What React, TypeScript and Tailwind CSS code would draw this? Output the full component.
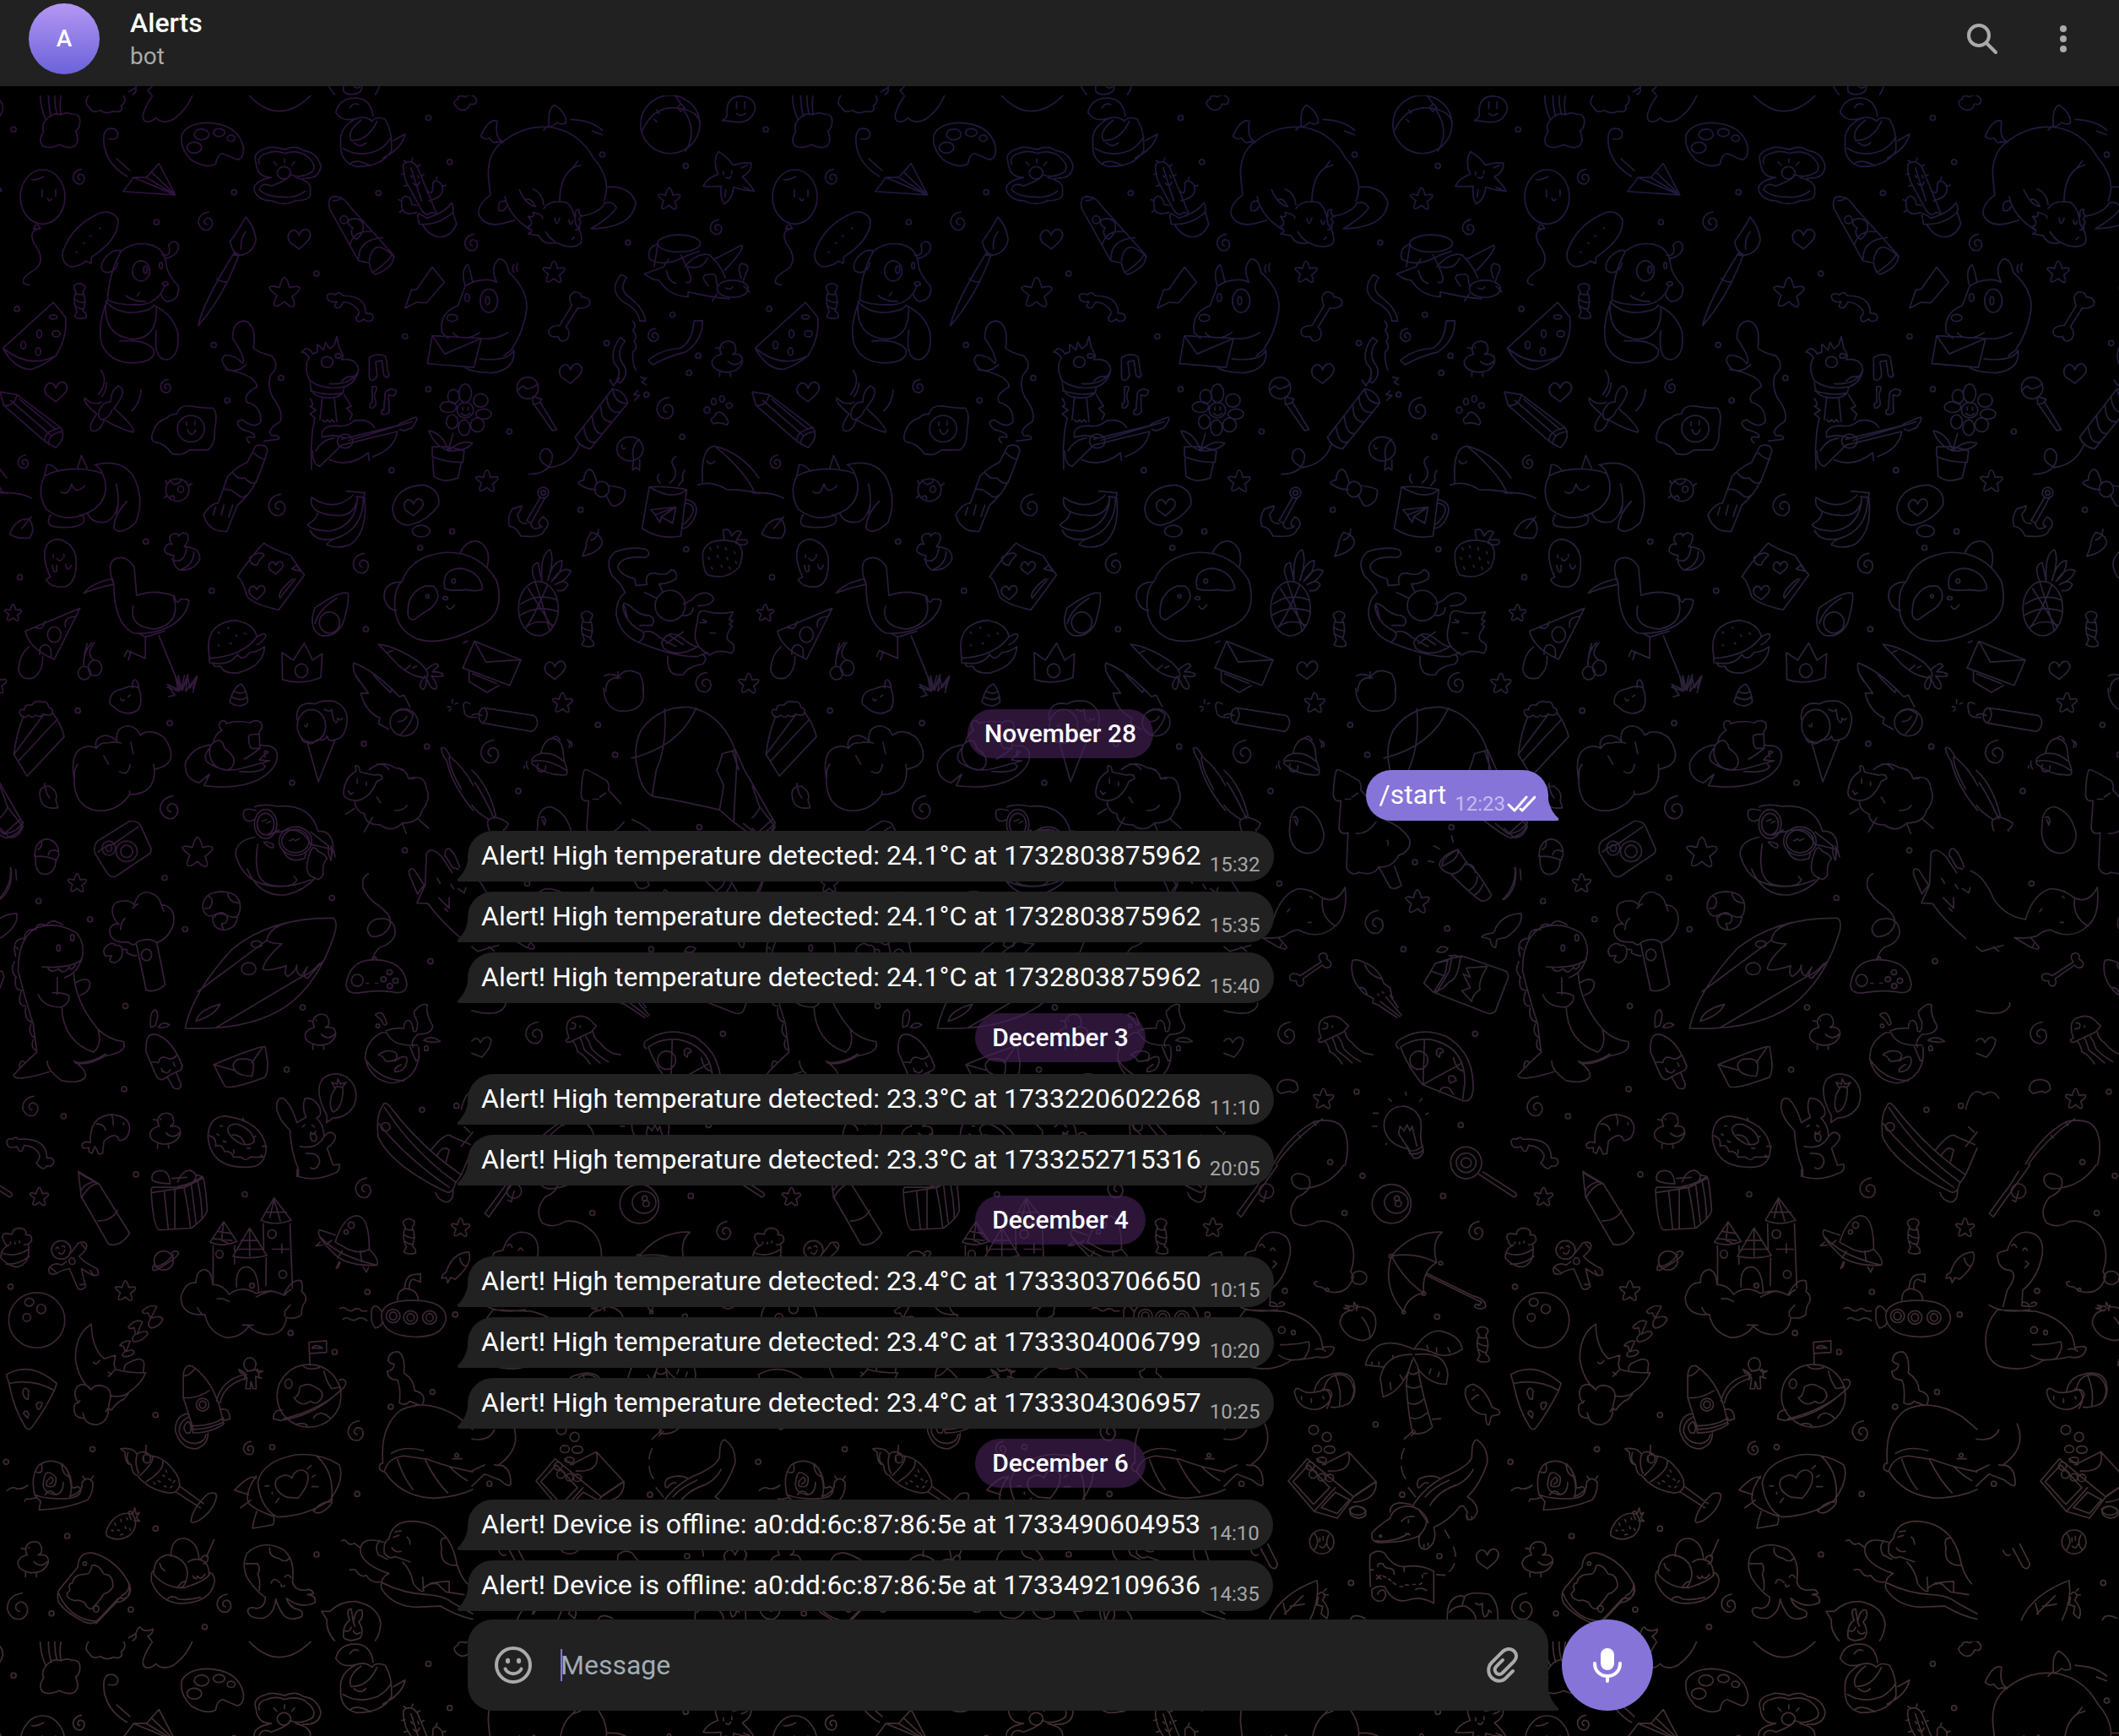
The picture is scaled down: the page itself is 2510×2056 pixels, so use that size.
import React from "react";

type Sheet = {
  x: number;
  y: number;
  sx: number;
  sy: number;
  paths: string[];
  ovals: number[][];
  stars: number[][];
  spirals: number[][];
  hearts: number[][];
  dots: number[][];
  ducks?: number[][];
  candies?: number[][];
};

const STAR = "M0 -12Q2 -12 4 -4Q12 -6 12 -3Q12 -1 6 3Q9 10 7 11Q5 12 0 7Q-6 12 -8 10Q-9 9 -6 2Q-12 -2 -12 -4Q-11 -6 -4 -4Q-2 -12 0 -12Z";
const SPIRAL = "M0 3Q-4 2 -3 -2Q0 -7 5 -3Q9 4 2 9Q-7 11 -10 1Q-10 -10 2 -12";
const HEART = "M0 12L-11 4Q-16 -5 -8 -10Q-2 -11 0 -4Q4 -14 11 -10Q17 -4 9 4Z";
const DUCK = "M-6 -4Q-11 -14 -2 -19Q10 -22 11 -11Q12 -6 7 -4Q20 -6 19 5Q14 18 -2 17Q-18 14 -17 4Q-14 -3 -6 -4M-13 -12L-8 -11M-8 17V22M5 17V22M2 4Q10 12 18 4M-4 -13v1";
const CANDY = "M-6 -19Q0 -24 6 -19Q8 -15 4 -12Q9 0 4 11Q9 14 8 19Q0 22 -6 18L-3 12Q-9 0 -4 -12Q-8 -15 -6 -19ZM-5 -10Q0 -7 5 -9M-6 -3Q0 2 7 1M-5 5Q0 9 5 9";

const top: Sheet = {
  x: 0,
  y: 100,
  sx: 0.574,
  sy: 0.4592,
  paths: [
    // jellyfish cloud, basin, pear and arc
    "M83 28Q83 60 95 92M100 28Q100 60 106 82M113 28Q112 55 118 78M126 28Q122 55 126 78M95 92Q108 70 125 78Q140 70 148 77Q165 75 165 95Q165 115 156 120Q165 145 155 158Q145 168 122 155Q100 168 88 158Q78 145 90 122Q85 105 95 92Z",
    "M183 28Q172 48 185 60Q190 75 207 67Q220 78 233 69Q255 75 250 55Q262 45 255 28M315 28Q285 85 300 95Q310 100 322 86Q335 105 360 88Q385 65 397 28M514 28Q575 110 642 28",
    // palette
    "M375 130Q370 165 395 195Q425 218 445 205Q448 180 460 178Q480 190 490 194Q505 190 502 160Q490 100 425 99Q385 102 375 130Z",
    // paper plane
    "M224 140Q245 145 243 125Q238 110 222 115Q210 125 216 165Q225 210 262 237M241 192L268 222M302 240L328 204L362 285L254 276L276 240L302 240M276 240L362 285M302 240L362 285M312 225L362 285",
    // balloon
    "M65 245Q75 248 90 238M87 272V290M115 272V288M98 293Q101 305 106 296M74 362l-5 10h14l-5 -10M75 375Q60 380 70 410Q95 450 75 475Q40 500 50 514l10 3",
    // clam
    "M528 200Q520 175 550 165Q560 158 587 168Q610 155 625 170Q655 175 662 210Q660 245 625 242M528 200Q530 240 560 240Q520 250 525 275Q535 300 560 300Q585 315 610 300Q645 300 640 275Q645 250 610 240M535 205Q530 185 550 178Q570 168 587 178Q612 168 630 182Q655 205 645 225Q620 245 598 232Q598 245 560 262Q540 250 535 272Q550 290 580 290Q610 295 630 275M565 200l6 8M587 192v10M608 200l-6 8",
    // snake
    "M770 82Q765 35 733 35Q700 35 693 72Q705 98 735 88Q755 80 768 95M722 60Q730 45 740 52M735 88Q700 110 703 150Q700 200 735 212Q790 212 808 170Q810 120 795 90Q775 80 768 95M745 92Q715 120 725 145Q760 145 778 95M708 165Q740 190 780 170Q800 155 808 135M812 145L836 128Q830 165 790 190M722 205Q735 190 765 210M730 150Q745 165 755 150",
    // cactus
    "M833 205Q850 190 862 215L880 270L898 325Q905 335 890 330Q880 345 868 320L838 250Q830 220 833 205ZM883 275Q895 290 893 255Q900 240 912 260Q920 290 885 300M860 330Q835 340 830 320Q825 290 838 288Q848 290 850 310L860 312M848 215L870 300M862 340Q860 325 880 345Q920 330 932 305Q940 325 930 335Q900 365 865 360ZM872 362Q885 390 905 393Q930 395 942 360L935 330M848 235l3 5M862 235l2 6M853 255Q860 268 866 252M838 200l-5 -4M850 196l2 -6M862 210l5 -3M870 235l5 -3M835 230l-6 2M840 260l-6 2M900 245l2 -6M914 262l6 -2M828 300l-5 -3M830 325l-5 4",
    // sleeping dragon
    "M1035 150Q1005 180 1008 240L1012 285Q985 310 988 335Q1000 370 1040 358L1062 350M1035 150Q1080 105 1130 110Q1190 115 1225 190Q1250 225 1252 265Q1300 260 1312 305Q1305 370 1220 372Q1262 340 1272 318Q1265 300 1248 305Q1240 330 1200 340M1252 265Q1250 290 1246 300M1122 118L1133 105Q1130 60 1145 53Q1170 75 1168 100Q1155 105 1150 98Q1140 110 1135 108M1038 148Q1020 140 1026 95Q1010 85 992 133Q1000 145 1010 138Q1018 155 1025 148L1038 150M1155 302Q1155 240 1182 215L1192 198M1182 215L1198 208M1042 290Q1050 340 1095 375M1045 302Q1025 295 1030 325Q1040 330 1045 315M1072 272Q1085 310 1105 315Q1095 290 1085 298M1100 270Q1120 280 1122 310M1178 90Q1220 92 1243 118M1222 120L1243 130",
    "M1122 320Q1135 295 1170 305Q1185 320 1188 360Q1205 390 1198 410Q1180 428 1148 408Q1120 415 1112 390L1090 385Q1105 378 1088 368Q1105 362 1090 340Q1105 345 1100 330Q1120 335 1120 345M1188 340Q1185 320 1196 323Q1192 335 1200 338L1194 348Q1203 355 1195 362Q1200 372 1188 375M1145 345Q1148 372 1155 345M1174 350Q1178 370 1182 352M1126 380Q1132 395 1148 408M1180 400l5 -6",
    // beach ball, ghost bubble, starfish
    "M1325 120Q1350 50 1405 62M1405 62Q1440 70 1445 100M1405 50Q1400 40 1392 28M1412 68Q1440 120 1415 172M1405 50l8 10l-8 10l-7 -10zM1355 65l5 10M1350 90l5 6",
    "M1500 70Q1500 30 1530 30Q1560 35 1558 65Q1550 100 1520 97L1490 93Q1503 88 1500 70ZM1520 45V62M1537 45V62M1520 75Q1530 85 1538 75",
    "M1482 173Q1500 185 1513 208Q1535 200 1550 203Q1552 225 1532 238Q1550 260 1556 275Q1530 272 1514 265Q1510 300 1494 308Q1485 290 1488 262Q1465 265 1451 262Q1460 240 1482 232Q1470 200 1482 173ZM1493 225v8M1510 222v8M1498 240Q1506 245 1508 236M1535 265l12 6M1496 290l2 -18M1530 215l12 -6",
    // chat bubble
    "M188 462L189 445Q245 400 244 350Q235 325 210 330Q150 360 130 430Q125 460 145 470Q165 470 178 455ZM157 432l2 2M172 408l2 2M186 390l2 2M205 370l2 2",
    // dog
    "M250 430Q275 405 305 412Q340 420 343 465Q345 490 368 520Q372 555 345 560Q335 555 332 540M340 520Q325 565 290 568Q240 570 222 555M250 430Q225 485 222 555Q200 620 210 670Q225 715 270 718Q320 718 318 685Q300 655 247 662M250 430Q235 420 215 450Q200 485 225 485Q240 480 243 460M335 440Q355 445 348 415Q360 395 368 415Q370 440 340 450M218 560Q240 590 275 588Q310 585 317 570M218 570Q215 650 275 657Q325 655 323 575M317 570Q355 590 367 640Q372 700 345 710Q315 710 323 635M260 545Q275 560 300 560M283 545l5 -8",
    // brush
    "M507 342Q490 380 475 405Q480 440 500 440Q525 430 528 400Q525 365 507 342ZM483 435Q420 560 409 622Q460 550 493 440ZM447 500Q458 512 470 508M480 440h14M507 380Q495 400 498 425",
    // bread roll
    "M680 320Q675 290 690 289Q710 290 722 315L812 440Q815 470 775 490Q765 485 762 460L740 455ZM814 445Q770 390 762 455M722 415Q730 375 765 380M740 450Q740 400 790 395M720 350Q735 340 748 355Q755 380 735 400Q720 385 728 370Q715 360 720 350M688 300Q700 300 705 292M768 485Q800 460 808 440",
    // postal dog
    "M960 520Q985 500 1015 505L1025 510M975 508Q968 465 965 465Q950 480 960 520L945 570Q905 590 912 640L925 655M1025 510Q1010 470 1030 450Q1045 450 1050 485Q1090 530 1087 580Q1080 640 1055 685L1040 700M1060 685Q1065 735 1015 744Q970 742 960 730M1060 685Q1050 715 990 708M990 655Q1020 660 1048 640M935 640Q945 660 975 650L990 640M1060 465q-4 10 0 20M1068 462q-4 10 0 20M892 648L993 655L978 730L882 720ZM892 648L918 695L993 655",
    // bolt and bones
    "M892 471L917 510L880 563L860 562L836 577L849 530L860 528Z",
    "M695 560Q675 565 675 545Q680 535 692 543Q700 530 708 545Q755 545 755 590Q775 590 768 608Q755 615 752 605Q735 620 735 600Q745 590 738 580Q725 560 708 562Q700 585 690 572Z",
    "M1192 577L1168 625Q1180 640 1170 658Q1155 668 1152 650Q1130 655 1133 632Q1142 620 1155 622L1180 570Q1170 545 1185 535Q1200 535 1200 548Q1220 550 1217 568Q1205 580 1192 577",
    // watermelon
    "M110 562L6 680Q60 735 115 700Q140 650 135 600ZM6 680Q30 735 65 735Q90 725 115 700",
    // bottle and steam
    "M508 722Q490 745 470 735Q450 710 465 698Q490 700 500 720Q510 710 480 655Q480 610 505 610Q530 620 523 680Q530 690 560 700Q580 725 558 750Q550 790 570 820Q585 850 578 870Q550 890 560 905Q580 905 575 915L545 920M465 735Q530 750 530 780Q500 800 510 820Q540 830 538 870Q525 890 500 865Q480 870 500 890Q530 900 525 910Q500 905 515 925",
    "M528 932Q550 925 552 945Q545 975 530 1020Q515 1060 490 1085L468 1153Q430 1155 420 1110Q435 1080 450 1080Q465 1030 470 1010Q490 985 510 975ZM523 950Q540 970 548 965M480 1000Q490 1020 505 1015Q520 1035 530 1025M460 1045Q475 1040 490 1058Q500 1070 508 1060M462 1085l-5 25M480 1085l-8 30M445 1090l-5 20",
    // llama with a guitar
    "M640 765Q625 730 638 705Q630 690 622 690L630 682Q640 680 645 695L655 690L655 670L668 685L672 665L680 682L690 672L695 650L700 680Q712 700 705 710Q735 705 740 735Q730 775 680 772M640 765Q670 790 710 780Q735 770 740 735M640 770Q640 810 680 808Q710 808 710 780M640 790Q680 805 708 795M640 810Q650 830 640 830L652 840L640 850L650 860L645 890L642 940L643 993M665 808L660 865M690 808L695 870M710 800L725 830L715 835L727 850L722 865M665 865l5 6l5 -6l5 6l5 -6l5 6M705 765l10 -10l18 -3",
    "M665 910Q660 880 695 880Q715 885 730 868Q760 860 773 885M770 960Q815 940 820 895M665 910Q690 900 712 912M652 945Q665 915 690 912M645 945Q645 980 660 985L705 930M680 968Q720 990 760 950L762 970M705 915L820 880L825 875L858 858Q865 860 850 885L835 893L825 890M705 930L820 895M720 918L850 870",
    // notes
    "M762 745V705Q780 690 796 702L802 750M762 745Q760 765 770 763Q780 755 778 745L775 715L788 712L792 750Q800 762 803 748M768 780V820M768 780Q780 775 776 790Q770 800 776 820Q775 835 765 835Q760 822 768 820M795 795L792 838M795 795Q805 780 818 790Q815 810 802 800L803 845Q795 855 788 850Q785 840 792 838",
    // flower pot
    "M935 900L925 945M925 945Q895 930 885 893Q915 900 925 945Q950 915 975 925Q965 945 925 945M892 935Q925 930 958 945L955 975Q920 975 892 960ZM893 965L895 1010Q915 1030 945 1015L952 975M955 832v8M966 832v8M952 848Q960 860 970 848",
    // lollipop, firecracker, ribbons
    "M1068 790Q1080 770 1085 785Q1100 785 1110 772M1100 805L1118 812L1112 822L1100 825ZM1103 827L1140 893L1149 890L1115 820",
    "M1187 910L1264 785Q1290 790 1295 822L1218 940Q1195 935 1187 910ZM1264 785Q1270 825 1295 822M1205 885Q1210 930 1230 922M1222 855Q1225 905 1245 900M1240 830Q1240 870 1262 870M1252 805Q1255 850 1278 845M1195 930Q1180 980 1135 988Q1105 970 1118 945Q1130 930 1140 955Q1140 1005 1092 1005",
    "M1282 490L1293 498Q1275 530 1300 550Q1330 580 1332 610L1320 610Q1318 580 1285 560Q1255 530 1282 490ZM1280 652L1290 662Q1270 690 1285 720Q1300 745 1280 770L1272 765Q1285 740 1268 720Q1258 690 1280 652ZM1432 610L1450 609Q1450 660 1415 690Q1380 700 1347 723L1338 712Q1360 685 1405 680Q1430 660 1432 610ZM1305 610Q1315 620 1306 635Q1318 650 1308 662Q1318 680 1306 690Q1305 720 1312 737M1322 755L1333 758L1325 768L1334 775M1316 790l-8 10l12 2l-10 12M1258 762l8 15l12 -20",
    // crab and bucket
    "M1357 415L1350 470M1443 430L1420 440Q1370 475 1340 450Q1335 420 1357 412M1405 440Q1440 520 1415 510M1380 450L1370 470Q1340 485 1330 488Q1345 505 1360 505Q1380 545 1420 548L1420 535Q1460 548 1505 553M1375 480Q1380 510 1395 513M1413 470Q1440 430 1465 440Q1490 470 1497 500M1420 470Q1450 480 1460 447M1475 450L1530 415Q1540 420 1495 480M1462 520Q1440 490 1465 490Q1480 485 1478 510L1482 520M1530 500Q1520 470 1530 462Q1550 465 1540 485L1533 510M1480 540l-10 18M1535 520l12 15M1498 525Q1508 532 1512 522",
    // pencil and propeller
    "M0 793L35 800L125 885Q138 910 115 937L92 920L8 828ZM35 800Q30 830 8 828M22 815L105 905M40 812L115 890M92 920Q90 895 125 885M100 928Q100 900 130 895",
    "M210 820Q190 830 175 808Q170 820 200 850Q180 885 190 893Q205 900 215 865Q250 890 275 897Q280 885 235 835Q265 790 245 778Q230 785 228 820Q215 815 205 840Q200 860 210 865Q225 862 232 838M208 737Q225 765 203 800M220 770Q220 790 210 805M291 787Q290 820 272 842",
    // fried egg
    "M315 900Q320 870 345 860Q350 850 365 850Q370 825 395 830Q420 835 440 835Q450 850 443 890Q445 925 430 942L390 943Q375 960 355 952Q340 925 318 922Q310 915 315 900ZM385 870v10M402 868v10M387 890Q395 915 404 890",
    // cat loaf and ladybug
    "M92 1010Q120 990 165 992Q200 995 212 1005Q230 1060 195 1095Q140 1140 95 1095Q75 1050 92 1010L97 980Q110 980 120 998M160 990L168 957L180 990M200 980Q250 965 275 1010Q300 1070 280 1130Q250 1165 235 1145Q235 1110 262 1075M212 1005Q205 985 195 980M240 1030Q248 1080 240 1105M180 1105Q190 1135 220 1128Q240 1115 243 1085M105 1110Q90 1140 120 1142Q170 1145 173 1125Q175 1110 165 1110M125 1050Q140 1065 148 1030Q155 1060 175 1035",
    "M350 1020Q360 1040 372 1025L375 1018M350 1065Q360 1055 360 1070M345 1030l-4 -8M390 1035l6 -6M345 1060l-6 6",
    // bananas, thought bubble, anchor
    "M715 1049L753 1053L751 1065L735 1063M643 1065Q690 1105 728 1060M643 1065Q635 1110 700 1112Q735 1110 738 1063M655 1105Q655 1120 635 1135Q640 1150 680 1152Q735 1140 738 1063M640 1150Q650 1180 690 1172Q750 1150 750 1065M690 1172Q675 1180 675 1188Q700 1200 725 1185Q760 1150 752 1065",
    "M810 1090Q820 1035 875 1033Q910 1045 905 1085Q880 1130 840 1137Q810 1130 810 1090Z",
    "M1115 1065L1087 1125L1096 1132L1125 1065M1057 1095L1077 1087Q1075 1100 1068 1108Q1070 1135 1087 1132M1057 1095Q1045 1120 1052 1140Q1065 1140 1075 1165Q1120 1170 1123 1150Q1140 1130 1120 1115Q1105 1135 1118 1140Q1100 1155 1095 1132",
    // bow, puffer, iceberg
    "M1232 1030Q1225 990 1215 993Q1205 1000 1205 1020Q1190 1025 1195 1030Q1210 1045 1230 1045M1255 1035Q1290 1040 1290 1048Q1290 1065 1285 1075Q1270 1092 1262 1085Q1250 1060 1250 1058",
    "M1320 915Q1300 935 1308 968M1307 972L1305 995L1313 988L1320 995L1320 968M1283 930Q1285 945 1290 938",
    "M1450 1028Q1445 935 1475 933Q1530 950 1566 1015M1475 933Q1540 1000 1558 1055M1440 1033Q1470 1020 1500 1045Q1540 1045 1568 1055M1458 970Q1465 985 1475 972M0 1053Q40 1050 65 1067",
    // mug
    "M1340 1038L1325 1145Q1360 1175 1405 1165L1417 1045Q1390 1075 1340 1038ZM1340 1038Q1380 1035 1417 1045M1415 1070Q1450 1080 1430 1125Q1420 1145 1407 1145M1415 1080Q1440 1085 1425 1115Q1418 1128 1410 1135M1343 1097L1395 1090L1388 1132L1365 1115L1362 1130L1352 1110ZM1352 1110L1395 1090L1365 1115M1395 960Q1380 970 1392 990Q1400 1010 1382 1028M1413 995Q1405 1010 1410 1020L1400 1035M1360 1005Q1352 1015 1362 1028",
    // leaves, ghost, bee
    "M65 1115L45 1145M20 1160Q30 1120 60 1120Q75 1150 60 1170Q35 1172 20 1160ZM1235 1147Q1235 1170 1220 1175M1220 1155Q1208 1180 1210 1190L1202 1217Q1240 1205 1243 1180Q1240 1160 1220 1155Z",
    "M92 1220Q90 1175 120 1173Q150 1180 157 1220Q160 1285 135 1295Q105 1300 95 1277L104 1270Q95 1250 92 1220ZM110 1220v-6M132 1218v-6M117 1222Q123 1235 130 1222M108 1240Q110 1262 117 1255L117 1240M135 1238Q140 1260 147 1240",
    "M358 1215Q335 1210 341 1195Q345 1182 355 1186Q345 1170 355 1160Q370 1155 368 1165Q378 1150 388 1162Q390 1180 380 1192Q415 1195 412 1225Q400 1255 370 1252Q355 1240 358 1215ZM355 1225Q380 1240 385 1195M372 1252Q400 1240 400 1205",
    // heron
    "M235 1290Q220 1240 235 1225Q260 1210 277 1245Q280 1290 282 1318Q320 1300 360 1320Q365 1345 372 1328Q390 1325 390 1335Q385 1365 365 1385Q330 1420 275 1415Q235 1390 235 1290L232 1275Q190 1285 173 1312Q195 1300 232 1290M275 1345Q265 1400 320 1405Q375 1390 358 1320M285 1415L300 1425V1480L262 1460M262 1460l-5 15M270 1462l-5 22M328 1422L365 1535M300 1425L340 1410M345 1555L370 1565L368 1525L375 1560L388 1522L383 1565L407 1525L398 1568",
    // pillow, avocado, burger, crown
    "M495 1260Q530 1200 545 1183Q555 1195 600 1215Q615 1245 628 1265Q590 1330 575 1355Q520 1340 510 1320Q500 1275 490 1270ZM610 1275Q580 1320 578 1325Q570 1310 605 1275M515 1220Q540 1200 545 1215Q535 1225 530 1240Q515 1240 515 1220M602 1250l18 5l-8 -15z",
    "M650 1350Q700 1305 718 1312Q722 1330 708 1390Q690 1430 660 1420Q635 1400 650 1350ZM650 1390Q660 1350 695 1325",
    "M432 1475Q420 1390 485 1382Q525 1390 530 1425Q500 1475 432 1480ZM530 1425Q550 1410 548 1425Q540 1440 530 1445M432 1480Q430 1495 440 1492Q440 1505 455 1500Q460 1520 490 1518Q545 1500 546 1450Q530 1465 515 1465Q500 1490 490 1470Q475 1500 440 1492M450 1412l2 3M470 1400l2 3M487 1420l2 3M505 1415l2 3M475 1440l2 3M450 1445l2 3",
    "M583 1535L582 1465L605 1485L628 1441L645 1485L665 1468L662 1530Q620 1550 583 1535Z",
    // panda
    "M830 1280Q850 1215 920 1207Q990 1205 1025 1280Q1045 1370 985 1400Q910 1450 860 1430Q810 1400 815 1330Q815 1300 830 1280ZM828 1283Q790 1285 793 1325Q800 1355 818 1357M950 1207Q965 1170 990 1180Q1015 1200 1005 1245M918 1300Q910 1250 950 1248Q990 1255 996 1300Q990 1310 960 1303Q930 1308 918 1300ZM855 1380Q835 1385 845 1330Q865 1285 895 1295Q915 1320 890 1350Q870 1365 855 1380ZM922 1345Q928 1362 938 1342",
    // pineapple and strawberry
    "M1075 1340Q1110 1310 1150 1330M1072 1370Q1110 1340 1152 1360M1085 1400Q1110 1375 1142 1395M1090 1300L1140 1400M1130 1290Q1100 1380 1085 1400M1105 1285Q1120 1340 1135 1410M1105 1282Q1090 1240 1110 1233L1118 1280Q1115 1210 1135 1200Q1145 1225 1130 1280Q1140 1230 1160 1228Q1160 1260 1138 1282Q1160 1240 1178 1255Q1170 1280 1145 1290Q1165 1275 1172 1290Q1165 1310 1150 1305",
    "M1495 1175Q1455 1175 1450 1210Q1450 1250 1460 1265Q1500 1280 1525 1245Q1540 1200 1520 1180L1495 1175L1492 1150Q1505 1140 1510 1165Q1520 1145 1530 1155L1520 1175Q1550 1170 1540 1185Q1530 1192 1518 1182M1465 1195l2 5M1480 1190l2 5M1497 1195l2 5M1515 1205l2 5M1462 1220l2 5M1480 1215l2 5M1500 1220l2 5M1518 1230l2 5M1468 1245l2 5M1488 1240l2 5M1505 1245l2 5",
    // cat in a basket
    "M1290 1310Q1280 1285 1265 1270Q1245 1230 1270 1205Q1310 1190 1335 1200Q1345 1215 1330 1220Q1280 1215 1275 1245Q1280 1265 1310 1275L1312 1292L1335 1290Q1330 1260 1350 1260Q1375 1270 1385 1252Q1400 1255 1395 1275Q1375 1290 1360 1288L1368 1310M1290 1310Q1270 1330 1272 1370Q1280 1420 1320 1440Q1400 1480 1440 1475L1460 1465M1295 1380L1290 1350Q1280 1330 1300 1345Q1320 1370 1340 1370Q1355 1380 1345 1395L1320 1395M1285 1345Q1290 1390 1325 1410Q1335 1420 1320 1437M1330 1412Q1345 1405 1360 1425Q1380 1440 1395 1450M1330 1310L1355 1325M1440 1380Q1440 1350 1460 1360Q1490 1368 1513 1360L1505 1380L1512 1384L1505 1392L1511 1398Q1490 1430 1510 1440Q1520 1450 1510 1467Q1480 1455 1465 1472Q1430 1450 1435 1410ZM1378 1475Q1375 1530 1410 1522Q1420 1500 1450 1495Q1462 1480 1450 1470M1410 1340Q1430 1330 1435 1320Q1460 1300 1473 1325Q1470 1345 1440 1345M1410 1370Q1430 1370 1430 1350M1365 1440Q1380 1400 1410 1430Q1430 1450 1440 1450Q1400 1480 1370 1455ZM1380 1420l30 25M1410 1412l-35 30M1445 1388h12M1465 1415h12M1450 1380l8 5",
    // cheese, cherries, carrot, envelopes
    "M165 1351L52 1410Q60 1455 112 1483ZM135 1400Q130 1375 155 1372M82 1470Q80 1445 95 1445Q108 1450 105 1478M72 1400Q90 1410 92 1385M60 1450Q40 1470 38 1510Q45 1540 70 1530Q90 1510 88 1475M172 1500Q172 1460 190 1440M195 1485Q175 1470 195 1440M180 1442l-6 28",
    "M781 1444Q820 1450 865 1490Q890 1520 880 1530Q850 1530 820 1495ZM880 1510Q900 1485 905 1500L892 1515Q915 1515 914 1525Q905 1530 890 1525Q905 1550 900 1558Q890 1565 880 1530Q880 1560 872 1560Q860 1550 878 1525M835 1510l12 -12M860 1500l-8 5M800 1465l10 -5",
    "M979 1436L1075 1484L1052 1550L955 1505ZM979 1436L1003 1490L1075 1484M968 1512L968 1540L1005 1568L1030 1550M975 1520L1025 1545M957 1440l8 -5",
    "M730 1492Q770 1510 815 1568M730 1492Q725 1510 742 1540M1250 1565Q1250 1530 1275 1530Q1290 1500 1320 1520Q1330 1545 1327 1568M1247 1525Q1265 1515 1280 1532M1275 1515v17",
    "M945 62Q930 45 945 38Q945 25 960 32Q975 20 983 38Q985 55 970 50Q965 70 950 65ZM1472 875Q1462 865 1475 855Q1480 838 1492 850Q1508 870 1500 878Q1485 870 1472 875Z",
  ],
  ovals: [
    [401, 163, 15, 14], [416, 129, 15, 14], [452, 124, 12, 10], [477, 139, 8, 8], [88, 290, 46, 70], [586, 228, 14, 16],
    [1383, 103, 61, 75], [291, 481, 18, 26], [300, 478, 4, 9], [332, 467, 3, 8], [341, 514, 6, 5], [710, 349, 8, 10],
    [1009, 558, 18, 30], [1006, 558, 4, 10], [964, 550, 5, 10], [933, 602, 11, 9], [110, 600, 8, 5], [81, 643, 5, 10],
    [116, 643, 8, 8], [48, 672, 5, 10], [79, 689, 5, 10], [675, 716, 12, 14], [698, 700, 6, 6], [712, 920, 16, 18],
    [960, 840, 17, 20], [960, 797, 13, 24], [992, 815, 15, 17], [998, 850, 16, 13], [985, 878, 14, 18], [958, 885, 12, 20],
    [933, 870, 12, 18], [925, 832, 17, 14], [936, 805, 12, 18], [1089, 783, 22, 28], [1401, 410, 44, 22], [1512, 527, 32, 22],
    [394, 888, 28, 34], [366, 1046, 24, 29], [373, 1044, 6, 8], [869, 1152, 18, 15], [1121, 1053, 11, 14], [1121, 1053, 5, 6],
    [1242, 1044, 15, 20], [1300, 940, 27, 31], [680, 1388, 21, 27], [622, 1512, 13, 18], [1111, 1352, 41, 70], [1383, 1344, 31, 39],
    [112, 1419, 14, 20], [174, 1518, 13, 17], [196, 1505, 14, 20], [936, 1281, 4, 5], [882, 1320, 3, 4], [919, 1325, 5, 4],
    [1459, 840, 6, 8], [1473, 818, 5, 8], [1490, 811, 5, 8], [1505, 828, 6, 7],
  ],
  stars: [[587, 537, 18], [1381, 295, 13], [1143, 484, 13], [1005, 1023, 13], [27, 1363, 10], [1545, 1545, 12]],
  spirals: [[165, 240, 9], [427, 355, 11], [975, 410, 10], [1480, 370, 9], [1350, 648, 8], [344, 780, 8], [1376, 838, 13], [50, 975, 8], [575, 1088, 13], [748, 1238, 12], [1455, 1545, 12]],
  hearts: [[617, 398, 14], [1177, 745, 14], [115, 792, 14], [1145, 1510, 13], [853, 1090, 12], [569, 1246, 9], [530, 1310, 10]],
  dots: [
    [28, 116], [323, 355], [483, 278], [781, 280], [928, 200], [884, 86], [1243, 181], [1296, 408], [1415, 210], [653, 488],
    [441, 672], [580, 757], [469, 815], [836, 650], [884, 786], [808, 995], [1051, 895], [933, 1153], [867, 1195], [1198, 1097],
    [1416, 1199], [1408, 909], [1422, 744], [1388, 594], [1441, 700], [1252, 667], [301, 1179], [437, 1306], [41, 1271], [35, 579], [755, 1405], [1334, 800],
  ],
  ducks: [[1499, 705]],
  candies: [[164, 560], [1211, 1406]],
};

const middleLeft: Sheet = {
  x: 0,
  y: 800,
  sx: 0.3571,
  sy: 0.4209,
  paths: [
    // cake slice
    "M65 105Q65 92 80 97Q82 78 105 84Q118 68 140 75Q158 70 162 90Q178 92 173 108Q160 115 145 108Q135 120 118 112Q110 122 95 112Q75 125 65 105ZM78 115Q55 160 46 222L90 283L213 172Q205 140 175 105M46 222L143 112M62 240L190 123",
    // strawberry face, grass, candy corn
    "M365 80Q360 45 405 38Q440 25 460 35Q475 70 460 95Q430 115 395 100ZM440 35Q438 10 450 12Q460 20 460 35M400 65Q405 75 412 68M425 60l8 -5M560 60L580 55L555 25L590 40L583 5L600 40L612 0M605 42L622 5L630 35L654 5L640 35M762 75Q775 30 800 24Q820 40 822 75Q795 95 762 75ZM768 60Q800 75 820 60M778 45Q800 55 815 45",
    // cloud
    "M246 290Q235 240 255 215Q285 190 320 205Q310 180 340 170Q365 165 388 185Q380 145 425 142Q455 145 465 168Q500 145 545 175Q590 230 545 255L512 265Q515 335 430 335Q390 385 320 380Q245 370 246 290ZM320 205Q330 190 350 190M355 190Q380 185 402 190M344 226L360 250M434 188L442 220M396 270Q425 285 432 250M512 265L510 250M430 335V325M247 290Q245 260 258 250",
    // bear on a float
    "M735 155Q720 135 735 128Q750 125 750 135Q790 125 830 133Q850 120 868 135Q872 150 860 158L862 205Q825 230 810 235M735 155Q712 165 707 190Q735 170 745 205Q780 225 776 245Q770 270 740 265Q700 255 695 220Q695 195 707 190M700 195Q640 200 615 245Q610 290 660 302Q670 295 695 278L677 310Q830 325 895 270Q930 240 915 210Q900 195 880 198L862 195M825 175Q820 165 858 165M825 175Q825 200 835 205L860 205M695 205Q670 230 690 245Q740 275 800 262L895 240L860 238L870 228L890 215Q870 205 880 230M795 270Q870 275 880 255L870 248",
    // ice cream and comet
    "M985 125Q980 80 1025 78L1045 80Q1070 68 1105 72Q1150 85 1152 125Q1145 180 1110 180Q1090 190 1085 170Q1075 185 1060 180L1075 165M1020 190L1056 299L1112 180M1000 178Q1010 195 1020 185Q1030 200 1045 185L1055 180M1010 140Q1020 150 1020 135M1075 95Q1095 105 1100 95L1105 120Q1118 145 1120 120Q1130 130 1135 120",
    "M1180 0L1222 50L1197 50Q1210 100 1260 120L1255 135L1290 152M1240 0L1295 48L1300 38L1325 60L1340 55L1360 88M1310 105Q1340 85 1370 110Q1365 135 1330 165M1320 130Q1340 130 1350 115",
    // sheep
    "M1180 260Q1175 250 1190 257L1195 272L1240 280Q1268 275 1268 290L1250 298Q1225 350 1180 352Q1135 350 1140 325Q1145 285 1180 270ZM1225 265Q1265 235 1310 260Q1345 260 1355 290Q1410 275 1415 320Q1430 350 1400 380Q1390 415 1335 415Q1300 445 1260 420Q1210 420 1210 390Q1175 380 1178 352M1250 250Q1275 245 1290 265M1330 265Q1350 270 1355 290L1375 290M1175 375L1146 390M1235 400L1208 440M1335 418L1348 445M1388 405L1422 430M1155 325l8 10l8 -5M1185 290v14M1215 300v10M1310 380Q1340 380 1350 365M1250 342l12 16",
    // parsnip and fuse
    "M1463 205Q1475 195 1495 230Q1540 260 1570 310M1463 205Q1470 230 1482 240Q1500 310 1570 380M1490 230Q1490 260 1530 320M1560 80Q1530 65 1540 100Q1540 120 1580 118M1485 88h10M1500 68v10M1510 80l8 -3M1490 100l6 -6",
    // basket corner, leaf
    "M0 310L25 370L76 425Q60 460 30 455L0 430M0 400Q10 395 25 372M10 445Q50 445 70 420M148 303Q150 330 165 345M132 335Q130 310 165 312Q195 330 185 350L192 372Q135 380 132 335ZM36 540Q45 600 0 630M52 545L55 575",
    // camera, acorn
    "M315 500Q310 475 325 465L430 410Q460 408 468 425L500 485Q505 498 490 505L385 565Q365 570 355 555ZM325 497Q345 480 375 475L460 425M115 510Q115 465 155 460Q195 465 195 505L188 520Q150 505 115 510ZM118 508Q115 560 150 560Q185 555 185 520M125 490Q140 485 138 468M160 505Q165 485 193 495",
    // bird with goggles
    "M850 380Q810 370 808 385Q805 410 830 410L845 405M845 370Q870 360 920 368Q1030 360 1055 438Q1100 435 1105 480L1098 520Q1085 500 1090 480Q1060 460 1030 440M845 455Q780 465 782 505Q800 560 850 580Q930 610 1030 575M855 475Q835 580 900 590Q970 600 985 575M1045 570Q1000 560 1030 495Q1040 475 1055 495Q1075 500 1085 515Q1068 530 1072 560Q1060 580 1045 570M820 545Q860 625 950 617Q1010 605 1045 570M940 495Q960 530 1010 515L1015 500M925 435Q900 445 890 450Q915 440 930 440Q1000 420 1030 475L1105 490L1112 510M875 468Q890 485 905 485Q915 470 875 468M985 575l-10 -10M960 465l15 -5M978 465l15 -6M870 410l15 -5M885 415l12 -5M1098 480L1100 510",
    // tree
    "M375 675Q365 640 400 635Q430 630 445 645Q460 605 495 610Q530 620 535 645Q585 650 575 700Q560 740 520 752Q495 735 455 750Q445 765 425 750Q365 755 363 715Q375 695 395 700Q380 690 375 675M400 715L402 700Q405 690 415 683M440 655Q450 645 458 643M535 645L543 663M452 755L485 885Q515 895 548 870L520 752M405 770Q400 755 385 760Q375 750 360 757Q335 770 350 790L370 788M370 790Q355 805 380 808Q410 800 405 770Q430 770 420 780Q440 790 453 788",
    // surfboard
    "M615 990Q640 890 770 770Q900 680 1105 683Q1120 690 1112 720Q1070 840 980 910Q860 1000 615 993ZM655 890L885 745M885 745Q895 700 990 690M885 745Q900 755 935 755Q880 795 872 825Q880 835 950 817Q940 840 955 847Q980 835 985 815Q980 840 1000 845L1020 820Q1000 850 1020 852L1070 805M718 990L1000 848M1000 848Q1030 840 1060 810M650 973Q660 940 730 925Q715 955 650 973Z",
    // mushroom, gamepad
    "M672 650Q675 610 735 608Q795 610 797 650Q795 685 770 680Q740 670 720 670Q680 690 672 650ZM705 680Q705 715 745 716Q785 710 787 680M690 620Q715 630 695 655L680 655M755 612Q760 640 795 640M710 680Q735 655 755 680Q755 700 735 698L740 712",
    "M1222 558Q1200 565 1203 595Q1220 630 1260 650Q1300 675 1295 700Q1280 735 1235 735Q1210 720 1225 700Q1240 680 1280 685Q1315 695 1310 730Q1300 755 1260 765Q1235 785 1240 798M1148 870Q1160 800 1240 800Q1340 800 1350 870Q1345 900 1300 890Q1250 885 1200 892Q1150 900 1148 870ZM1215 866h8M1245 866h8M1233 800l5 -8h8l3 8",
    // fox head
    "M1410 590L1415 500Q1430 480 1465 510L1500 555M1476 510Q1475 485 1490 487Q1510 500 1525 540M1357 560Q1355 535 1375 548L1407 590L1385 615ZM1410 590L1383 640L1420 642Q1460 690 1530 740M1450 570l10 15M1455 625L1490 655V625M1520 600l20 12l5 -15M1505 600l-10 -12M1475 655l10 8M1480 510l20 30l20 5",
    // dinosaur
    "M60 830Q60 740 120 710Q190 690 255 725Q290 765 265 810Q250 840 215 850M140 820Q230 825 272 800M158 822Q170 840 195 825Q210 845 230 820Q235 835 250 815M60 830Q80 900 110 980L122 1060Q70 1100 45 1125Q50 1145 165 1115M120 710Q125 695 155 703Q170 680 208 702M80 740Q85 710 120 715M50 780Q40 740 82 740M52 790Q40 750 60 770M48 805Q30 830 55 850M52 850Q45 890 75 885M70 890Q55 930 85 930M85 935Q80 970 105 975M103 980Q90 1005 115 1020M110 1025Q100 1050 122 1055M85 1090Q65 1075 65 1105M190 850V898M245 840Q250 920 325 995Q360 1025 410 1030Q425 1060 350 1070Q280 1105 245 1085Q290 1110 283 1130Q265 1150 205 1140Q155 1110 157 1085M205 935Q210 1030 310 1060Q340 1040 325 995M127 898Q145 935 205 933Q235 920 228 900Q200 890 175 893M250 865Q290 845 298 865Q300 890 265 900M250 1090Q310 1090 350 1065",
    // popsicle and love letter
    "M485 1060Q480 1005 515 1010Q570 1020 605 1100L600 1110Q570 1120 540 1137Q525 1140 515 1120ZM500 1090Q510 1085 525 1090Q530 1070 550 1075Q570 1085 585 1070M555 1130L575 1160Q600 1170 600 1150L585 1118M535 1105l4 10M575 1090l5 10M540 1112Q555 1125 565 1110M500 990Q495 945 515 940Q530 950 515 985ZM525 990Q540 970 562 983Q550 993 525 990Z",
    "M709 1095L745 1155Q760 1168 880 1130Q890 1110 887 1085L880 1045Q865 1040 709 1095ZM709 1095L775 1110M835 1090L870 1048M805 1080Q785 1075 773 1095Q775 1120 810 1125L835 1128Q845 1100 838 1085Q815 1075 805 1080",
    // fish bowl
    "M1265 1005Q1210 1030 1212 1080Q1230 1140 1300 1147Q1380 1140 1390 1070L1388 1045M1265 1005L1283 1005Q1300 1040 1360 1040L1385 1040M1280 1000Q1310 990 1340 993Q1340 970 1355 970Q1370 975 1370 1000Q1385 1010 1385 975Q1365 945 1380 940Q1400 920 1418 927Q1410 950 1435 985Q1435 1010 1385 1010Q1360 1030 1370 1045M1245 955Q1270 935 1283 980Q1275 990 1265 970ZM1405 1027Q1430 1010 1460 1030Q1435 1035 1405 1027ZM1408 1045Q1420 1035 1420 1055L1408 1055ZM1255 1068Q1280 1050 1310 1060Q1325 1070 1310 1082Q1280 1090 1275 1080Q1270 1070 1255 1068ZM1310 1085Q1350 1060 1350 1085Q1345 1115 1310 1115Q1305 1105 1330 1095M1360 1045L1380 1085L1388 1080M1212 1080Q1260 1140 1340 1140",
    // rabbit, speech carrot
    "M985 1258Q965 1205 940 1190Q915 1185 918 1220Q925 1250 962 1280Q965 1340 990 1390V1410Q1050 1425 1110 1400Q1130 1395 1125 1375L1105 1378L1085 1330Q1115 1310 1112 1295Q1095 1275 1075 1298Q1075 1265 1050 1245Q1070 1240 1060 1215Q1040 1185 1012 1190Q1000 1215 1015 1243L985 1258M995 1325Q1050 1335 1075 1298M1003 1270l8 -5M1035 1265l8 5M1030 1290Q1030 1315 1045 1310Q1055 1300 1045 1290ZM1030 1285l10 5l8 -8M1015 1345Q1060 1340 1060 1370Q1050 1395 1030 1385M985 1390v20M1083 1258L1085 1240Q1040 1170 1070 1135Q1105 1110 1150 1130Q1195 1160 1175 1210Q1150 1245 1105 1245ZM1115 1157Q1135 1155 1138 1165Q1135 1220 1105 1228Q1090 1215 1100 1180ZM1110 1160L1100 1145L1118 1150L1120 1135L1130 1150L1148 1145L1135 1160",
    // boat
    "M1270 1210Q1275 1195 1295 1215Q1400 1330 1530 1405L1510 1430Q1500 1460 1480 1453Q1300 1380 1255 1300Q1245 1240 1270 1210ZM1275 1215Q1370 1340 1510 1425M1255 1260Q1350 1360 1490 1440M1445 1455Q1450 1475 1480 1482Q1505 1480 1503 1445M1430 1335Q1480 1280 1500 1298L1560 1320M1450 1350Q1470 1320 1490 1335L1480 1368M1530 1325L1568 1285M1568 1330L1530 1405M1540 1270l18 15M1530 1220Q1550 1150 1590 1180Q1620 1160 1640 1190",
    // shrimp, bone
    "M300 1315Q295 1240 370 1235Q430 1240 430 1275Q425 1310 395 1308Q385 1280 345 1310L340 1345L328 1347L315 1325L305 1345L295 1340V1328Q270 1335 272 1320Q280 1308 300 1315ZM370 1237Q378 1250 375 1265M320 1262Q345 1260 350 1280M410 1258v6",
    "M55 1325Q25 1335 22 1312Q25 1300 40 1305Q55 1295 60 1305Q150 1300 155 1350L155 1358Q180 1355 178 1372Q170 1385 155 1380Q145 1395 130 1380L120 1372Q130 1365 132 1350Q120 1325 80 1322Q70 1355 55 1325Z",
    // donut
    "M690 1300Q690 1240 750 1240Q870 1255 883 1330Q880 1380 830 1383Q700 1390 690 1300ZM755 1280Q755 1260 790 1263Q840 1280 843 1310Q835 1325 800 1318Q760 1300 755 1280ZM770 1293Q800 1290 812 1318M695 1295Q720 1300 715 1325Q735 1315 745 1340Q765 1335 775 1355Q790 1355 800 1355Q815 1370 830 1355L870 1355M805 1245l5 8M730 1268h8M720 1290l6 4M740 1310l10 3M840 1300l8 -4M775 1335v10M820 1330h10M870 1325h15M865 1350l10 5",
    // gift
    "M505 1440Q500 1445 502 1460Q510 1560 530 1560L635 1555Q690 1520 687 1500Q680 1420 672 1410L610 1440ZM505 1455L615 1440L672 1415M545 1452L558 1558M580 1445V1558M610 1440Q625 1500 632 1555M635 1435L650 1540M655 1420Q670 1480 670 1525M565 1430Q525 1430 505 1420Q500 1400 520 1395Q560 1385 565 1430ZM590 1425Q600 1395 630 1392Q665 1405 640 1425Q610 1435 590 1438M570 1415l50 -3M650 1405L672 1410",
    // marker
    "M265 1435L260 1395L268 1400L328 1430Q300 1428 270 1470L265 1435M262 1400L320 1428M268 1450Q280 1430 310 1425M272 1470L360 1600Q400 1610 430 1570L328 1430M325 1535Q370 1535 390 1505",
  ],
  ovals: [
    [1033, 142, 47, 46], [1340, 132, 46, 38], [361, 486, 22, 20], [361, 486, 10, 9], [420, 495, 35, 29], [420, 495, 20, 17],
    [881, 418, 37, 41], [881, 418, 28, 30], [980, 466, 54, 40], [980, 466, 45, 33], [486, 786, 17, 16], [851, 756, 18, 9],
    [825, 825, 24, 17], [1185, 858, 19, 17], [1292, 835, 9, 7], [1272, 855, 9, 7], [1312, 859, 9, 7], [1293, 874, 9, 7],
    [194, 767, 6, 9], [240, 738, 6, 9], [1279, 1270, 15, 12], [1253, 986, 6, 5],
  ],
  stars: [[655, 498, 18], [256, 584, 11], [130, 1467, 11]],
  spirals: [[567, 375, 14], [106, 1215, 12], [1210, 1445, 12]],
  hearts: [],
  dots: [
    [258, 99], [563, 134], [969, 302], [1207, 192], [1416, 200], [1343, 492], [546, 569], [1101, 626], [128, 635], [299, 686],
    [614, 714], [1428, 804], [1004, 934], [951, 1109], [416, 930], [412, 1164], [211, 1240], [451, 1404], [812, 1460], [1400, 1222], [1514, 1211],
  ],
  ducks: [[545, 1278], [1060, 1000]],
};

const bottomLeft: Sheet = {
  x: 0,
  y: 1400,
  sx: 0.3571,
  sy: 0.4184,
  paths: [
    // cupcake, gingerbread man, planet
    "M12 165Q0 150 20 145L40 148Q40 130 68 130Q92 135 85 150Q105 145 105 165Q95 180 80 177M12 165Q20 185 30 178Q0 190 3 215Q30 240 60 240Q100 230 95 180M5 200Q50 215 95 190M20 232Q60 235 98 210M35 175v-5M50 175v-5M65 172v-5",
    "M235 200Q245 190 260 172Q285 165 288 180Q285 195 262 210Q275 225 310 240Q330 245 325 262Q310 268 295 258L270 245Q275 270 285 295Q270 310 258 300L230 245Q200 250 185 260Q160 265 162 245Q175 225 205 235L220 225M185 190Q190 180 195 188M205 182Q212 178 215 185M195 200Q210 210 215 192M165 240l20 15M270 175l15 15M265 290l18 0M300 250l10 15",
    "M510 235Q500 250 515 250Q590 215 593 200Q585 190 570 200M515 240Q550 235 575 205",
    // castle
    "M707 180V285M697 170L742 112L785 168Q740 185 697 170ZM778 180V195M773 210L828 130L885 208Q830 220 773 210ZM866 108L909 45L966 108Q910 125 866 108ZM873 118L875 190M883 215L882 293M962 118L970 300M785 297Q780 240 820 240Q855 245 858 310M778 215V232M705 160l65 5M742 112L735 165L755 172M725 140l40 5M785 190h90M828 130V210M800 165h55M880 85h70M909 50L895 100M909 50L930 110M903 190h55M935 175v25",
    "M655 375Q600 370 600 325Q615 280 650 285Q650 250 680 247Q705 255 705 290Q740 290 760 318Q800 290 850 315Q900 300 940 320Q970 270 1000 280Q1005 300 1000 310Q1020 320 1012 340Q1000 350 1000 375Q980 390 950 383Q945 430 890 432Q850 430 825 408Q800 440 750 440Q690 425 680 375ZM655 355Q665 375 680 377M720 330h20l20 8M850 325Q870 315 900 308M945 380V365L963 348M805 405h35M965 305Q950 310 945 320",
    // ufo, fish
    "M1112 170Q1140 95 1185 95Q1225 100 1225 190Q1195 205 1155 190ZM1112 150L1060 135Q1045 150 1100 195Q1140 240 1250 235Q1260 220 1225 190M1062 155Q1120 210 1250 235M1120 215L1135 195M1195 195L1200 225M1062 170L1048 180L1070 178M1125 225L1115 245L1122 240L1128 228M1205 240L1215 255L1222 242M1085 175l15 -10",
    "M1480 255Q1500 200 1555 198Q1570 230 1510 275L1495 270L1485 285L1480 270L1465 272L1468 262ZM1525 215Q1530 235 1545 238",
    // submarine
    "M1265 380Q1265 335 1370 335Q1475 335 1480 385Q1470 440 1375 438Q1270 435 1265 380ZM1318 335Q1320 300 1350 302Q1385 305 1388 335M1342 302Q1345 265 1370 262L1395 260L1395 283L1370 275Q1355 280 1358 303M1265 365Q1245 340 1233 360Q1228 400 1245 413Q1265 410 1270 395M1127 358Q1140 352 1150 360Q1165 370 1175 360Q1190 355 1200 365H1217M1138 388Q1150 380 1160 388Q1175 395 1185 387Q1200 380 1217 392",
    // moon and cloud
    "M303 402Q250 430 250 500Q260 560 303 588M303 402Q305 470 345 500L383 490L378 515L383 530L360 550M360 538L370 545M383 530Q420 540 483 540Q470 570 420 600Q400 610 365 605M310 510Q320 520 330 505M412 532Q410 515 430 510Q475 490 478 515L475 538M303 588Q310 575 330 575Q370 580 367 610Q360 630 360 640Q360 680 320 687Q285 685 280 668Q245 670 246 640Q245 625 260 625Q240 600 255 580Q275 565 298 582M260 625L265 618M280 668l-5 -15M350 650L358 640L370 645Q390 620 410 615L425 600",
    "M472 365Q495 345 520 352L500 385Q535 375 540 388Q530 410 500 413Q485 405 500 385L490 370Q475 375 472 365ZM426 410Q450 385 472 395L455 430Q490 415 490 430Q475 450 445 452Q430 445 450 430L445 412Q430 418 426 410ZM397 463Q410 448 432 450L418 480Q445 470 445 483Q435 495 410 494Q400 490 415 478L410 465Z",
    // pizza slice
    "M21 545Q100 505 188 570L180 590Q145 650 105 695Q95 705 85 695Q45 640 30 570ZM30 570Q110 555 180 590M75 595Q80 575 95 590L93 615Q80 615 75 595ZM120 630Q125 620 140 625Q135 645 125 643ZM78 655Q85 640 95 655L92 668Z",
    // rocket and astronaut
    "M608 550Q610 515 635 520Q700 555 730 640L738 670Q700 690 638 690L608 610ZM608 610Q650 615 695 590M610 548Q625 550 645 530M638 690L640 710Q700 710 742 685L738 670M640 700Q690 700 740 680M730 645Q760 635 763 670L745 675L738 665M625 655Q580 660 582 705Q600 755 650 755Q690 745 690 710M625 665Q590 680 595 710Q610 740 650 740Q680 735 683 715M618 710Q600 690 625 678Q640 690 630 710ZM718 620Q735 560 810 545M730 625Q740 575 815 555",
    "M812 545L820 555L815 585H830L832 565L840 585H850L848 550L868 555M812 540L792 530L798 540L818 545M850 535L872 535L860 540M818 535L855 530L860 555M812 545v15",
    // flagged planet
    "M1028 518L1025 453L1083 449V482L1030 485M1035 470Q1045 455 1070 470ZM935 645Q905 645 907 670L930 675Q1040 660 1115 600Q1150 580 1147 565Q1140 555 1125 560M940 670Q1060 645 1130 590M1075 535Q1080 560 1100 585L1130 580M975 610Q990 610 995 580Q1020 565 1045 580Q1075 590 1068 610Q1050 635 1030 620Q1000 640 975 610ZM985 685Q1010 680 1020 690M1040 668Q1060 640 1095 668M1005 520Q1020 535 1060 525",
    // whale
    "M1270 795Q1260 690 1330 645Q1420 610 1520 665L1568 700M1275 820Q1250 815 1262 798L1270 795M1275 820Q1285 780 1340 775L1420 785Q1480 805 1568 820M1278 822Q1330 890 1440 895Q1520 890 1568 870M1298 768Q1340 745 1405 760M1318 785Q1340 840 1370 870M1410 785Q1440 840 1485 880M1490 805Q1520 830 1550 845M1400 632Q1420 600 1375 590Q1375 560 1340 540Q1345 490 1320 480Q1290 480 1287 505Q1295 515 1308 515Q1305 535 1285 535Q1285 560 1318 560Q1330 580 1325 625Q1345 635 1360 620Q1385 630 1395 632M1502 783h30",
    // snail
    "M115 885Q100 830 130 800Q180 775 220 810Q245 860 232 890M115 885Q160 900 232 895Q270 890 268 868L258 862Q235 870 238 860Q235 820 205 797Q205 830 235 835M115 885Q130 900 135 905Q130 920 130 928Q220 925 290 900Q310 880 308 850Q290 830 272 850Q278 875 232 890M165 855Q185 845 170 835Q150 845 155 860Q190 870 185 835Q150 805 145 845Q135 880 185 885Q210 880 210 850M150 885Q165 865 185 885M118 820Q145 830 138 800M280 840l-6 -8M303 840l6 -8M23 873Q40 860 55 868Q75 870 92 858M82 904Q85 893 95 898L122 893",
    // sundae glass
    "M400 755Q440 750 455 770Q475 755 500 775Q530 775 560 800Q600 835 595 860Q590 880 560 880Q490 870 455 830Q440 830 435 800Q415 800 415 765ZM425 765Q415 790 435 800M455 770Q445 800 460 825M475 775l3 15M505 775Q515 790 465 830M540 790Q545 815 485 848M595 860L675 910M585 878L665 922M485 745L483 770M550 815l3 6M540 830l6 3M560 840l6 4M575 850l5 -5M525 845l6 4M545 860l6 3M565 865l6 -4M510 850l4 5M633 960Q640 920 690 882Q720 875 718 890Q710 930 660 958Q635 968 633 960Z",
    // airship
    "M855 850Q870 790 980 772Q1060 765 1125 800Q1145 840 1095 900Q1020 945 920 948Q865 925 855 850ZM850 832Q810 880 825 910Q850 930 905 945M1050 775Q1110 820 1100 900M850 838Q830 825 778 872L825 885M852 932Q840 960 838 980L905 970Q912 960 908 945M798 922L832 900M1100 890Q1105 910 1090 920Q1060 945 1040 932Q1060 905 1095 905M968 838Q950 820 918 840Q900 870 950 892L988 895Q1030 855 1020 825Q1000 805 975 825ZM1020 812l12 -10M1035 835l10 -5M1035 862h20M925 895l-10 12M903 878v5M880 860h12",
    // strawberry, toast
    "M440 940Q400 930 370 960Q345 990 355 1002Q390 1020 430 1000Q455 980 448 955ZM440 940Q435 925 425 935L435 955M440 940L447 922L452 940L462 935L452 950L463 960L445 958M380 965l3 6M400 955l3 6M420 950l3 6M390 985l6 1M415 975l3 6M430 980l3 6M370 985l6 2M400 998l8 -1",
    "M258 1090Q260 1045 310 1050Q390 1070 430 1140Q440 1170 410 1180Q400 1175 390 1180L325 1240Q310 1255 280 1245Q220 1220 195 1190Q185 1165 200 1150ZM195 1165L200 1175Q240 1240 320 1243L405 1170Q430 1160 428 1135M318 1250L385 1190Q430 1185 430 1150M285 1110Q300 1110 305 1085Q325 1080 345 1110Q375 1110 375 1145Q360 1165 345 1165Q330 1185 305 1208Q290 1210 280 1190Q260 1180 250 1185Q220 1180 222 1165L232 1155Q225 1135 240 1135Q245 1110 285 1110Z",
    // ice-cream bowl
    "M567 1060Q565 1010 610 1008Q655 1015 660 1065M510 1110Q510 1060 560 1055Q620 1065 622 1110Q615 1150 595 1148M625 1075Q650 1060 680 1075Q695 1090 693 1115M510 1100Q500 1100 502 1130Q530 1190 600 1193Q700 1190 712 1130Q710 1105 693 1105M512 1112Q550 1150 610 1148Q680 1130 695 1110M553 1183Q570 1165 590 1180Q620 1185 665 1175M710 1012L685 1060M665 1070Q675 1050 690 1060Q690 1080 675 1080M530 1080l5 12l12 8M640 1115Q650 1130 655 1115Q665 1130 680 1110M590 1148Q600 1130 615 1130",
    // octopus
    "M880 1175Q850 1160 820 1120Q800 1080 820 1050Q870 1010 940 1040Q980 1070 970 1130Q975 1155 1010 1155Q1035 1150 1040 1165L1020 1168Q1050 1170 1045 1190Q1000 1210 950 1178Q960 1205 990 1210Q1010 1215 1000 1230Q960 1245 940 1225Q920 1200 915 1180Q910 1225 870 1235Q820 1235 822 1210Q830 1200 850 1207Q880 1205 880 1175M815 1080H855Q865 1095 855 1110Q865 1130 860 1155M895 1035Q890 1060 925 1065Q945 1080 960 1065M900 1135Q905 1115 928 1133M945 1118Q955 1105 965 1120M933 1138Q930 1150 945 1142",
    // seal on a board
    "M1290 1010Q1300 960 1370 960Q1480 965 1510 1060Q1520 1110 1550 1137M1290 1010Q1270 1020 1275 1050Q1290 1070 1310 1060L1360 1075M1275 1020Q1200 1000 1195 1040Q1195 1080 1290 1108M1260 1015Q1240 1030 1255 1055L1285 1068M1290 1108Q1260 1120 1265 1150Q1300 1200 1380 1203L1460 1200Q1520 1230 1568 1237M1270 1135Q1340 1165 1420 1168Q1470 1170 1500 1190L1568 1222M1335 1075Q1365 1100 1370 1135Q1390 1160 1405 1158L1402 1118M1402 1150L1430 1135Q1470 1130 1490 1130V1158M1420 1140Q1450 1130 1460 1145L1480 1160L1540 1168M1480 1007Q1455 1005 1465 1035Q1455 1085 1515 1085M1300 1035Q1310 1050 1330 1045M1305 1005l18 -5M1310 990l20 -3M1350 1005q10 5 10 20M1133 1015Q1145 1010 1150 1018Q1160 1030 1175 1022L1195 1035M1160 1098Q1180 1092 1185 1105Q1200 1120 1215 1113Q1230 1135 1260 1132",
    // bubble and star at the end of the tile
    "M1110 1298Q1080 1270 1085 1240L1067 1215L1095 1215Q1130 1185 1180 1187Q1255 1200 1263 1250Q1260 1280 1245 1298M1160 1240Q1145 1210 1165 1208L1172 1245Q1180 1205 1200 1212Q1208 1230 1190 1245Q1210 1270 1195 1290Q1160 1305 1140 1290Q1135 1255 1160 1240M1145 1270Q1160 1275 1165 1260M1172 1245l5 12M1195 1275Q1180 1285 1172 1270",
    "M440 1298Q455 1290 450 1280Q460 1250 470 1265Q485 1275 508 1265Q505 1280 490 1285L502 1298M427 1290L450 1278",
  ],
  ovals: [
    [203, 192, 32, 26], [239, 224, 10, 9], [543, 222, 32, 27], [728, 204, 12, 11], [902, 147, 14, 12], [938, 261, 13, 11],
    [836, 293, 8, 7], [1165, 122, 10, 9], [1148, 141, 7, 6], [1304, 379, 23, 19], [1304, 379, 12, 11], [1362, 383, 23, 19],
    [1362, 383, 12, 11], [1425, 383, 23, 19], [1425, 383, 12, 11], [122, 391, 93, 78], [97, 340, 15, 11], [137, 359, 15, 13],
    [89, 383, 13, 11], [672, 630, 21, 18], [672, 630, 11, 10], [829, 516, 20, 19], [1025, 605, 106, 89], [957, 571, 12, 13],
    [487, 783, 13, 12], [281, 1080, 6, 5], [319, 1208, 9, 9], [1515, 773, 6, 5],
  ],
  stars: [[416, 308, 12], [1528, 129, 11]],
  spirals: [[1185, 707, 12], [828, 755, 8], [65, 1205, 16], [748, 1195, 11]],
  hearts: [],
  dots: [
    [35, 296], [964, 427], [1110, 481], [1219, 311], [1510, 375], [1435, 594], [1296, 636], [516, 659], [307, 756], [20, 792],
    [903, 750], [1185, 883], [223, 1002], [516, 981], [1050, 1054], [171, 1221], [434, 1210], [679, 1259],
  ],
  ducks: [[107, 1065]],
  candies: [[1356, 155]],
};

const middleRight: Sheet = {
  x: 559,
  y: 815,
  sx: 0.3333,
  sy: 0.3603,
  paths: [
    // firecracker, peach, bell
    "M45 65L220 90Q235 100 232 120Q225 142 210 142L40 115Q22 110 25 85Q30 65 45 65ZM45 65Q65 85 40 115M0 90Q15 78 35 90M468 0Q470 60 520 75Q600 80 610 30L608 0",
    "M245 215Q255 170 285 165Q325 170 325 220L328 240Q345 275 335 285Q270 290 215 250Q205 225 245 215ZM245 215Q290 210 325 240M215 240Q270 230 335 270M285 165q15 -15 28 5M235 250Q225 270 245 275Q265 275 262 255M350 175q10 10 2 18M340 170q12 10 5 25M195 240q-5 12 5 25M186 255v8",
    // parsnip, egg, pine
    "M0 270Q60 320 85 420L60 432Q20 410 0 385M10 310Q40 350 80 430M85 425Q110 430 130 445L120 462Q108 465 115 470M60 432Q50 440 62 468",
    "M235 430Q245 390 280 390Q340 410 355 480Q350 540 295 543Q235 535 232 470ZM245 425L255 422L262 435L258 450L250 432",
    "M388 350Q390 290 400 268Q410 265 480 305Q490 320 485 335L530 380M388 350Q390 375 415 370L408 460Q415 485 440 475L435 590Q450 620 480 605Q530 620 550 588Q600 590 620 550Q665 535 660 500Q640 460 570 432M430 365h20M455 358L475 345M470 478Q510 480 540 440M550 588L590 655Q610 665 630 648L605 585M580 500q5 8 2 16",
    // hot-air balloon
    "M590 270Q570 200 600 140Q660 60 770 62Q880 80 930 190Q945 240 940 270M685 68Q695 190 655 270M797 65Q740 190 568 230M890 215Q910 210 935 205M890 215Q880 250 870 270M935 200L968 268M925 205L948 268M590 270Q600 330 640 355Q740 370 880 400M655 270L640 355M940 270L930 440M968 268L1075 440M870 270L895 320L880 400L930 440M930 440Q1000 490 1020 492Q1070 480 1078 440M965 445L1010 480L1070 430",
    // flashlight
    "M765 580Q770 550 830 530L860 570L870 580Q900 600 950 680Q940 700 915 700Q880 680 805 610Q770 600 765 580ZM830 530Q840 560 775 585Q770 560 830 530ZM860 570Q840 610 805 612M900 620Q900 650 870 665M920 645Q910 670 890 680M860 580Q890 575 892 605M745 518L765 528M808 485l6 22M725 568l20 4M1033 590Q1040 650 990 695",
    // fox body and tail
    "M-20 600Q30 620 60 690Q100 750 175 760M175 760Q200 680 260 660Q300 655 350 690Q400 710 430 655Q440 750 395 782Q340 830 265 795Q240 795 215 815Q180 825 135 820M350 690Q340 750 395 782M305 685l8 5M225 735l8 -10M298 770h12M135 820L190 850Q225 865 222 850L195 822M200 850l5 -10M0 850l20 15L95 845M60 850l20 15",
    // bone, squid
    "M270 945L345 900Q325 875 355 870Q370 875 365 890Q385 900 378 915Q360 925 350 910L280 955Q290 975 270 980Q255 975 257 962Q230 965 233 945Q245 930 270 945",
    "M455 900Q460 885 495 900Q550 920 567 970L590 985L595 1010L600 1018M455 900Q445 960 500 1005L530 1020L528 1035L545 1040M500 908Q510 940 555 955M480 985Q500 980 508 1005M545 1040L615 1083M555 1030L625 1080M575 1015L630 1075M590 1010L618 1050M545 1005l6 5M562 998l6 5",
    // chocolate
    "M750 905L710 970L745 1000L940 1070Q960 1070 965 1060L1010 950Q1010 935 1000 930L845 880L800 890ZM735 930L780 945M750 905L795 895L785 940L745 1000M810 880L800 930L755 1000M840 882Q830 960 800 965Q780 990 745 1000M860 920L935 915Q900 970 910 990Q880 1010 880 1030L845 995L875 985L850 940L875 950ZM755 865Q770 840 795 855Q785 875 755 865M800 880L820 878L845 885",
    // fish, jellyfish
    "M960 800Q980 745 1055 740Q1065 780 1000 820L970 825L965 852Q950 855 945 825L915 818Q920 808 955 805Z",
    "M345 1150Q325 1100 355 1085Q400 1065 430 1100L442 1110L425 1130Q390 1145 355 1160Q335 1170 335 1155ZM358 1160Q370 1170 375 1195Q395 1200 420 1235M385 1150Q395 1170 400 1190Q430 1210 455 1232M405 1145Q420 1165 425 1185Q450 1210 485 1228M430 1130Q435 1155 455 1165Q470 1185 500 1200L528 1205M355 1100Q375 1100 365 1118L350 1120M385 1110v5",
    // pizza
    "M620 1185Q600 1170 625 1155Q700 1110 790 1145Q890 1200 885 1320Q880 1365 845 1355L705 1303Q650 1240 627 1180M627 1180Q670 1150 735 1155Q860 1180 855 1300L848 1350M712 1155L707 1303L840 1235M765 1330Q770 1305 800 1315L815 1335M815 1215Q825 1255 848 1258M755 1190Q770 1175 780 1195L768 1200L765 1213L755 1205ZM800 1275Q820 1270 825 1290L805 1298Q795 1290 800 1275",
    // bean, bulb
    "M188 1320Q190 1285 230 1287Q265 1290 262 1320Q245 1335 235 1325L200 1332Z",
    "M655 1515Q630 1510 610 1500Q560 1470 570 1420Q590 1370 645 1375Q705 1390 700 1450Q695 1480 705 1510M620 1465L625 1440L640 1455L650 1435L660 1455L668 1440M620 1465L660 1520M668 1440L685 1505M655 1520Q685 1525 705 1505L708 1525Q695 1550 675 1545ZM658 1530Q690 1535 708 1518M585 1350l10 8M645 1328l2 10M703 1350l-8 8M725 1397l-8 4M530 1397h18M528 1440h14M575 1500l3 -4",
    // rod
    "M175 1565Q230 1470 320 1425Q400 1410 425 1450Q450 1500 430 1568M185 1565Q250 1480 350 1415M265 1470l8 8M320 1430l6 8M0 1160Q20 1140 30 1165Q50 1135 68 1155Q70 1180 35 1213L0 1200M0 1060Q100 1085 120 1040L118 1035",
  ],
  ovals: [[692, 1223, 32, 30], [860, 1560, 55, 52], [860, 1560, 35, 32], [860, 1560, 18, 16]],
  stars: [[322, 48, 12], [687, 702, 14], [353, 1350, 12]],
  spirals: [[70, 213, 14], [540, 773, 14], [227, 1137, 13]],
  hearts: [],
  dots: [[448, 121], [509, 219], [165, 338], [808, 457], [678, 572], [196, 642], [793, 790], [637, 858], [892, 1136], [471, 1327], [841, 1436], [377, 1558]],
};

const bottomRight: Sheet = {
  x: 559,
  y: 1380,
  sx: 0.3333,
  sy: 0.3603,
  paths: [
    // rod, line, hook
    "M190 0L60 170L46 158L120 65M120 65L150 20M150 85l-10 35l-12 -5M425 0Q380 60 310 73Q240 90 240 40Q260 15 300 40Q320 80 260 105Q220 150 250 190Q290 210 330 185Q390 175 440 230Q475 280 450 350L460 365Q440 430 370 415L345 400Q320 400 320 385L330 382",
    // swan
    "M75 300Q70 285 110 280Q130 220 180 220Q240 225 235 290Q220 370 165 410L162 462M75 300Q80 345 120 345Q150 360 110 410L95 465M125 265q12 -12 18 5M165 280q8 -15 16 0M175 315l12 8l-15 15M162 462Q210 470 215 455Q205 445 195 455M45 460Q100 490 190 475M55 500L75 475Q180 480 210 480Q300 500 340 560Q350 590 350 600Q395 590 390 605Q380 640 330 630Q280 640 240 640Q180 680 100 665M55 500Q20 560 40 620Q60 660 100 665M200 590Q260 590 300 580Q310 600 285 635Q230 650 195 625M165 450Q185 450 190 465M325 605Q350 600 360 612",
    // lollipop stick, umbrella
    "M905 30L1030 105Q1045 100 1035 90L920 22M595 298Q670 215 775 220Q735 250 755 320Q680 285 595 298ZM595 298Q560 400 638 482Q650 430 710 420Q640 380 595 298ZM755 320Q700 350 710 420M720 355L885 430Q930 440 930 465Q910 480 890 465Q895 450 905 462L915 450L880 435L720 362",
    // peach
    "M412 520Q415 480 455 478Q470 460 500 468Q545 480 538 530Q530 575 490 576Q430 570 412 520ZM455 478L425 470L445 468L430 460L460 465L462 450L470 465L475 460L470 478M490 500Q520 530 518 570",
    // palm
    "M675 605Q720 540 770 545Q840 560 846 605Q790 640 740 615Q700 600 680 605M675 605Q590 570 545 595Q510 620 502 657L565 663M668 622Q570 620 555 700L565 762Q640 740 668 640M680 622Q790 610 795 690L790 720Q730 720 690 670M670 640Q640 700 650 750Q655 820 670 880Q710 890 740 860Q700 740 688 660L672 632M655 680Q670 695 690 680M650 725Q670 740 700 725M652 780Q680 795 708 770M662 830Q690 840 720 815M740 835L770 833M720 592l5 12M755 600v15M795 600l8 15M600 625v12M625 690l10 14M590 715l3 22M735 670l-6 15M765 680l-5 15M550 655v-8M525 655v-8M675 870L640 900M680 875l-15 15",
    // dashed trail
    "M640 932Q630 950 630 965M630 990Q632 1015 645 1030M655 1060L680 1090M690 1130Q720 1150 725 1175M785 1200L800 1225M815 1255Q825 1280 822 1285M818 1310Q810 1330 800 1335M785 1348L755 1346",
    // walnuts, coins, chest
    "M250 745Q255 725 275 740Q300 755 350 740Q380 730 383 755Q370 800 320 803Q260 800 250 745ZM320 745Q330 700 370 690Q440 670 460 710Q475 760 440 785Q400 800 380 795M355 738Q360 700 395 690Q420 740 410 790M395 690Q450 680 462 740Q455 780 440 785M275 760v10M310 768v12M350 760l5 8M350 735Q385 740 375 780L365 800",
    "M228 1038L295 965L460 1090L402 1160L320 1138ZM320 1138L395 1060M245 1040L300 985L375 1060L318 1115ZM345 1125L395 1075L445 1100L402 1145ZM350 985L442 942L540 1040L460 1090M442 942Q460 1010 370 1005M540 1040Q545 1100 460 1108M538 1040L465 1085M445 1130Q470 1110 503 1135V1150Q480 1170 450 1150ZM330 965L360 985",
    // crocodile
    "M525 1210Q540 1190 590 1160Q600 1125 650 1120Q670 1120 690 1130L720 1170Q715 1200 690 1220Q640 1240 570 1240Q520 1245 525 1210ZM670 1120Q710 1060 780 1025Q870 990 880 960Q880 900 900 903Q940 930 935 980Q910 1050 865 1090Q900 1110 900 1140Q885 1170 870 1165Q855 1160 865 1140L850 1120L840 1120Q800 1170 745 1190Q760 1240 720 1262Q690 1265 692 1230L695 1215M590 1140Q590 1110 630 1110L665 1115M690 1060Q680 1045 695 1030Q730 1015 765 1028M695 1060Q710 1040 725 1045M732 1118Q760 1070 830 1050Q870 1030 885 1000M715 1090Q740 1060 800 1035M630 1170Q650 1150 675 1155M655 1165v10M645 1210L660 1215M540 1235Q610 1240 655 1210M865 1165v-8M880 1162v-8M710 1255v-8M725 1250v-8",
    // map
    "M520 1385Q515 1290 520 1280Q545 1260 570 1275Q600 1320 640 1320Q700 1310 745 1335V1440Q700 1415 650 1430Q600 1440 570 1385Q545 1380 525 1395V1415Q540 1440 565 1430Q580 1415 570 1400Q555 1390 545 1410M545 1320Q545 1305 565 1310Q570 1325 585 1325Q605 1325 605 1345M542 1348l15 12M557 1348l-15 12M565 1350l10 5M585 1360l8 6M600 1372l10 6M625 1385h10M645 1380h10M670 1378h10M695 1378l8 -5M705 1355v-8M710 1342h10M640 1322v14M680 1395Q700 1385 720 1398M522 1330h8",
    // baseball, fish
    "M320 1210Q345 1235 320 1265M372 1215Q355 1245 378 1265M340 1225v12M352 1220v12M340 1252Q355 1265 362 1245",
    "M858 760Q850 725 885 720Q930 735 952 795L975 805Q985 815 975 820L950 825L942 852Q930 860 930 820Q880 820 858 760ZM880 770Q895 755 905 755M885 738h3",
    // leaf and bug
    "M160 1495Q200 1410 330 1365Q340 1430 305 1495M215 1475L280 1415M210 1440L220 1475M235 1450L285 1443M335 1410Q350 1395 358 1415L350 1430Q380 1460 365 1490M335 1420L330 1445L350 1450L345 1475L365 1490M355 1400l8 -8M358 1412h12",
    // sundae
    "M793 1495Q790 1420 840 1415L855 1418Q870 1400 940 1410Q975 1430 973 1495M855 1418L845 1450M800 1470Q820 1445 860 1450Q895 1470 895 1495M893 1440Q910 1450 918 1440Q915 1470 925 1485Q940 1480 940 1462L950 1470M448 1495Q460 1470 500 1490",
    // whale tail
    "M0 900Q60 910 80 870M145 850Q180 930 95 985Q140 990 138 1050Q130 1060 100 1035Q60 1020 45 1015L0 1055M0 1005L45 985M80 985L95 987M130 1260L165 1320Q185 1335 190 1310L155 1245M95 1265Q105 1290 120 1280",
  ],
  ovals: [
    [595, 127, 69, 64], [612, 122, 42, 36], [614, 109, 9, 8], [619, 126, 11, 10], [150, 85, 26, 24], [480, 370, 27, 22],
    [205, 542, 12, 11], [246, 550, 7, 7], [365, 893, 16, 15], [318, 870, 17, 15], [330, 933, 16, 12], [375, 935, 19, 12],
    [347, 969, 16, 9], [306, 989, 14, 13], [316, 1016, 14, 13], [347, 1026, 13, 12], [375, 1028, 14, 12], [475, 1136, 27, 14],
    [347, 1238, 43, 39], [593, 299, 7, 6], [770, 322, 7, 6], [709, 422, 7, 6], [638, 483, 6, 5], [556, 1219, 4, 3], [366, 409, 6, 5],
  ],
  stars: [],
  spirals: [[900, 218, 11]],
  hearts: [[935, 1293, 14]],
  dots: [[492, 35], [428, 157], [778, 101], [216, 413], [757, 498], [538, 852], [633, 1083], [765, 1285], [451, 1373], [62, 1047]],
  candies: [[918, 591]],
};

const SHEETS = [top, middleLeft, bottomLeft, middleRight, bottomRight];

function Glyph({ d, at, sheet, unit }: { d: string; at: number[]; sheet: Sheet; unit: number }) {
  const x = sheet.x + at[0] * sheet.sx;
  const y = sheet.y + at[1] * sheet.sy;
  const k = at.length > 2 ? at[2] / unit : 1;
  return <path d={d} transform={`translate(${x} ${y}) scale(${k})`} vectorEffect="non-scaling-stroke" />;
}

function Doodles() {
  return (
    <g fill="none" stroke="#fff" strokeWidth="1.7" strokeLinecap="round" strokeLinejoin="round">
      {SHEETS.map((s, i) => (
        <g key={i}>
          <g transform={`translate(${s.x} ${s.y}) scale(${s.sx} ${s.sy})`}>
            {s.paths.map((d, j) => (
              <path key={j} d={d} vectorEffect="non-scaling-stroke" />
            ))}
            {s.ovals.map(([cx, cy, rx, ry], j) => (
              <ellipse key={j} cx={cx} cy={cy} rx={rx} ry={ry} vectorEffect="non-scaling-stroke" />
            ))}
          </g>
          {s.stars.map((p, j) => <Glyph key={j} d={STAR} at={p} sheet={s} unit={12} />)}
          {s.spirals.map((p, j) => <Glyph key={j} d={SPIRAL} at={p} sheet={s} unit={11} />)}
          {s.hearts.map((p, j) => <Glyph key={j} d={HEART} at={p} sheet={s} unit={14} />)}
          {s.ducks?.map((p, j) => <Glyph key={j} d={DUCK} at={p} sheet={s} unit={1} />)}
          {s.candies?.map((p, j) => <Glyph key={j} d={CANDY} at={p} sheet={s} unit={1} />)}
          {s.dots.map(([x, y], j) => (
            <circle key={j} cx={s.x + x * s.sx} cy={s.y + y * s.sy} r="3" />
          ))}
        </g>
      ))}
    </g>
  );
}

const COLUMNS = [-891, 0, 891, 1782, 2673];
const ROWS = [-1831, 0, 1831];

function Wallpaper() {
  return (
    <svg className="absolute inset-0 h-full w-full" aria-hidden="true">
      <defs>
        <linearGradient id="hue" x1="0" y1="0" x2="1" y2="0">
          <stop offset="0" stopColor="#2f123d" />
          <stop offset="0.35" stopColor="#26153e" />
          <stop offset="0.55" stopColor="#1d1a40" />
          <stop offset="1" stopColor="#1e1b3e" />
        </linearGradient>
        <linearGradient id="warm" x1="0" y1="0" x2="0.2" y2="1">
          <stop offset="0.2" stopColor="#3e2a33" stopOpacity="0" />
          <stop offset="0.75" stopColor="#3e2a35" stopOpacity="0.85" />
          <stop offset="1" stopColor="#423031" />
        </linearGradient>
        <clipPath id="tile-clip">
          <rect x="-400" y="113" width="1700" height="1831" />
        </clipPath>
        <g id="tile" clipPath="url(#tile-clip)">
          <Doodles />
        </g>
        <mask id="doodles" maskUnits="userSpaceOnUse" x="0" y="0" width="100%" height="100%">
          <g transform="translate(0 -102)">
            {ROWS.map((y) => COLUMNS.map((x) => <use key={`${x}/${y}`} href="#tile" x={x} y={y} />))}
          </g>
        </mask>
      </defs>
      <g mask="url(#doodles)">
        <rect width="100%" height="100%" fill="url(#hue)" />
        <rect width="100%" height="100%" fill="url(#warm)" />
      </g>
    </svg>
  );
}

type Item =
  | { kind: "date"; text: string }
  | { kind: "in"; text: string; time: string }
  | { kind: "out"; text: string; time: string };

const ITEMS: Item[] = [
  { kind: "date", text: "November 28" },
  { kind: "out", text: "/start", time: "12:23" },
  { kind: "in", text: "Alert! High temperature detected: 24.1°C at 1732803875962", time: "15:32" },
  { kind: "in", text: "Alert! High temperature detected: 24.1°C at 1732803875962", time: "15:35" },
  { kind: "in", text: "Alert! High temperature detected: 24.1°C at 1732803875962", time: "15:40" },
  { kind: "date", text: "December 3" },
  { kind: "in", text: "Alert! High temperature detected: 23.3°C at 1733220602268", time: "11:10" },
  { kind: "in", text: "Alert! High temperature detected: 23.3°C at 1733252715316", time: "20:05" },
  { kind: "date", text: "December 4" },
  { kind: "in", text: "Alert! High temperature detected: 23.4°C at 1733303706650", time: "10:15" },
  { kind: "in", text: "Alert! High temperature detected: 23.4°C at 1733304006799", time: "10:20" },
  { kind: "in", text: "Alert! High temperature detected: 23.4°C at 1733304306957", time: "10:25" },
  { kind: "date", text: "December 6" },
  { kind: "in", text: "Alert! Device is offline: a0:dd:6c:87:86:5e at 1733490604953", time: "14:10" },
  { kind: "in", text: "Alert! Device is offline: a0:dd:6c:87:86:5e at 1733492109636", time: "14:35" },
];

function Tail({ className }: { className: string }) {
  return (
    <svg className={className} width="14" height="36" viewBox="0 0 14 36" fill="currentColor" aria-hidden="true">
      <path d="M14 0C14 15 9 26 1 33C0 34 1 36 3 36H14Z" />
    </svg>
  );
}

function Row({ item }: { item: Item }) {
  if (item.kind === "date") {
    return (
      <li className="-mr-[124px] flex h-15 items-start justify-center">
        <span className="flex h-[58px] items-center rounded-full bg-[#4a235c]/60 px-5 pb-[2px] text-[30px] font-medium">{item.text}</span>
      </li>
    );
  }
  if (item.kind === "out") {
    return (
      <li className="flex justify-end">
        <div className="relative flex h-15 items-end rounded-[30px] rounded-br-none bg-[#8774d9] pr-[15px] pl-4">
          <p className="self-center pb-[2px] text-[32px]">{item.text}</p>
          <time className="ml-[10px] pb-1 text-[24px] leading-8 text-[#c5bbee]">{item.time}</time>
          <svg className="mb-[10px] ml-[2px]" width="34" height="20" viewBox="0 0 34 20" fill="none" stroke="#fff" strokeWidth="3" strokeLinecap="round" strokeLinejoin="round" role="img" aria-label="Read">
            <path d="M2 11L9 18L23 2M16 16L18 18L33 2" />
          </svg>
          <Tail className="absolute -right-[13px] bottom-0 -scale-x-100 text-[#8774d9]" />
        </div>
      </li>
    );
  }
  return (
    <li className="flex">
      <div className="relative flex h-15 items-end rounded-[30px] rounded-bl-none bg-[#212121] px-4">
        <Tail className="absolute bottom-0 -left-[13px] text-[#212121]" />
        <p className="self-center pb-[2px] text-[32px]">{item.text}</p>
        <time className="ml-[10px] pb-1 text-[24px] leading-8 text-[#a6a6a6]">{item.time}</time>
      </div>
    </li>
  );
}

export default function App() {
  return (
    <div className="flex min-h-screen flex-col bg-black font-['Roboto',sans-serif] whitespace-nowrap text-white">
      <header className="flex items-center bg-[#212121] px-[34px] pt-1 pb-[14px]">
        <div className="flex size-[84px] items-center justify-center rounded-full bg-linear-to-b from-[#b597f3] to-[#6c61da] text-[28px] font-medium">A</div>
        <div className="ml-9 flex-1">
          <h1 className="text-[32px] leading-10 font-medium">Alerts</h1>
          <p className="mt-[2px] text-[28px] leading-9 text-[#aaaaaa]">bot</p>
        </div>
        <button type="button" aria-label="Search" className="mr-14 flex size-12 items-center justify-center">
          <svg width="48" height="48" viewBox="0 0 48 48" fill="none" stroke="#aaaaaa" strokeWidth="4" strokeLinecap="round">
            <circle cx="20" cy="20" r="12" />
            <path d="M29 29L40 40" />
          </svg>
        </button>
        <button type="button" aria-label="More actions" className="flex size-12 items-center justify-center">
          <svg width="48" height="48" viewBox="0 0 48 48" fill="#aaaaaa">
            <circle cx="16" cy="12" r="4" />
            <circle cx="16" cy="24" r="4" />
            <circle cx="16" cy="36" r="4" />
          </svg>
        </button>
      </header>
      <main className="relative flex flex-1 flex-col items-center justify-end pb-[30px] pl-[2px]">
        <Wallpaper />
        <div className="relative w-full max-w-[1404px]">
          <ol className="mb-[10px] flex flex-col gap-3 pr-[124px]">
            {ITEMS.map((item, i) => (
              <Row key={i} item={item} />
            ))}
          </ol>
          <form className="flex gap-4" onSubmit={(e) => e.preventDefault()}>
            <div className="relative flex h-27 flex-1 items-center rounded-[30px] rounded-br-none bg-[#212121] pr-9 pl-8">
              <button type="button" aria-label="Emoji">
                <svg width="44" height="44" viewBox="0 0 44 44" fill="none" stroke="#aaaaaa" strokeWidth="4" strokeLinecap="round">
                  <circle cx="22" cy="22" r="20" />
                  <path d="M12.500 26.500C16 34 28 34 31.500 26.500" />
                  <ellipse cx="15.500" cy="17" rx="2.600" ry="3.200" fill="#aaaaaa" stroke="none" />
                  <ellipse cx="28.500" cy="17" rx="2.600" ry="3.200" fill="#aaaaaa" stroke="none" />
                </svg>
              </button>
              <div className="relative ml-[34px] flex flex-1 items-center">
                <span className="absolute left-0 h-[38px] w-[2px] bg-[#8774e1]" aria-hidden="true" />
                <input type="text" aria-label="Message" placeholder="Message" className="w-full bg-transparent text-[32px] leading-10 outline-none placeholder:text-[#a2acb4]" />
              </div>
              <button type="button" aria-label="Attach file">
                <svg width="38" height="44" viewBox="0 0 38 44" fill="none" stroke="#aaaaaa" strokeWidth="4" strokeLinecap="round" strokeLinejoin="round">
                  <path d="M32 29L24.500 36.500C20 42 12 42 7 37C2 32 2 24 7 19L20 6C24 2 30 2 33.500 5.500C37 9 37 14 33 18L20 31C18 33.500 14.500 33.500 12.500 31.500C10 29 10 26 12.500 23.500L20 16" />
                </svg>
              </button>
              <Tail className="absolute -right-[13px] bottom-0 -scale-x-100 text-[#212121]" />
            </div>
            <button type="button" aria-label="Record voice message" className="flex size-27 items-center justify-center rounded-full bg-[#8774d9]">
              <svg width="40" height="44" viewBox="0 0 40 44" fill="none" stroke="#fff" strokeWidth="4" strokeLinecap="round">
                <rect x="12" y="2" width="16" height="26" rx="8" fill="#fff" stroke="none" />
                <path d="M5 20C5 40 35 40 35 20M20 36V41" />
              </svg>
            </button>
          </form>
        </div>
      </main>
    </div>
  );
}
